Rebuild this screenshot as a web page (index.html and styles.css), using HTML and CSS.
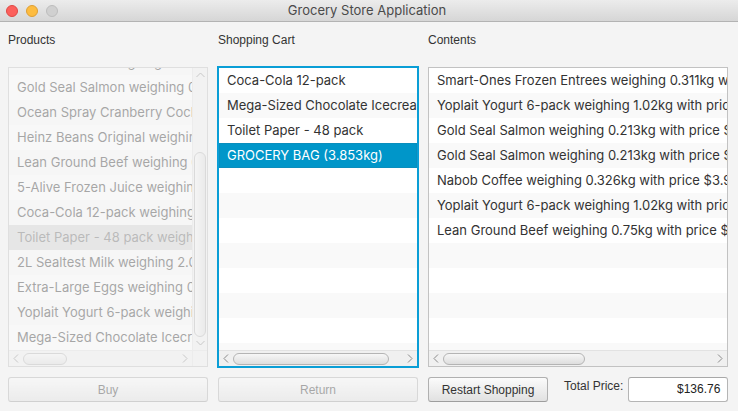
FILE: index.html
```html
<!DOCTYPE html>
<html>
<head>
<meta charset="utf-8">
<title>Grocery Store Application</title>
<link rel="stylesheet" href="styles.css">
</head>
<body>
<div class="window">
  <div class="titlebar">
    <div class="lights">
      <span class="light red"></span>
      <span class="light yellow"></span>
      <span class="light gray"></span>
    </div>
    <div class="title">Grocery Store Application</div>
  </div>
  <div class="content">
    <div class="col col-products">
      <div class="label">Products</div>
      <div class="list disabled has-vscroll">
        <div class="viewport">
          <div class="rows scrolled">
            <div class="row alt">Nabob Coffee weighing 0.326kg with price $3.99</div>
            <div class="row">Gold Seal Salmon weighing 0.213kg with price $5.49</div>
            <div class="row alt">Ocean Spray Cranberry Cocktail weighing 1.89kg with price $3.29</div>
            <div class="row">Heinz Beans Original weighing 0.398kg with price $1.79</div>
            <div class="row alt">Lean Ground Beef weighing 0.75kg with price $6.99</div>
            <div class="row">5-Alive Frozen Juice weighing 0.355kg with price $1.99</div>
            <div class="row alt">Coca-Cola 12-pack weighing 4.26kg with price $5.99</div>
            <div class="row selected-unfocused">Toilet Paper - 48 pack weighing 2.0kg with price $24.99</div>
            <div class="row alt">2L Sealtest Milk weighing 2.06kg with price $3.49</div>
            <div class="row">Extra-Large Eggs weighing 0.75kg with price $3.79</div>
            <div class="row alt">Yoplait Yogurt 6-pack weighing 1.02kg with price $4.29</div>
            <div class="row">Mega-Sized Chocolate Icecream weighing 2.5kg with price $7.99</div>
          </div>
        </div>
        <div class="vscroll">
          <svg class="arrow" width="9" height="6" viewBox="0 0 9 6"><path d="M0.5 5 L4.5 1 L8.5 5" fill="none" stroke="#8a8a8a" stroke-width="1"/></svg>
          <div class="vtrack"><div class="vthumb"></div></div>
          <svg class="arrow" width="9" height="6" viewBox="0 0 9 6"><path d="M0.5 1 L4.5 5 L8.5 1" fill="none" stroke="#8a8a8a" stroke-width="1"/></svg>
        </div>
        <div class="hscroll">
          <svg class="arrow" width="6" height="9" viewBox="0 0 6 9"><path d="M5 0.5 L1 4.5 L5 8.5" fill="none" stroke="#8a8a8a" stroke-width="1"/></svg>
          <div class="htrack"><div class="hthumb thumb-products"></div></div>
          <svg class="arrow" width="6" height="9" viewBox="0 0 6 9"><path d="M1 0.5 L5 4.5 L1 8.5" fill="none" stroke="#8a8a8a" stroke-width="1"/></svg>
        </div>
        <div class="corner"></div>
      </div>
      <button class="btn wide" disabled>Buy</button>
    </div>

    <div class="col col-cart">
      <div class="label">Shopping Cart</div>
      <div class="list focused">
        <div class="viewport">
          <div class="rows">
            <div class="row">Coca-Cola 12-pack</div>
            <div class="row alt">Mega-Sized Chocolate Icecream</div>
            <div class="row">Toilet Paper - 48 pack</div>
            <div class="row selected">GROCERY BAG (3.853kg)</div>
            <div class="row"></div>
            <div class="row alt"></div>
            <div class="row"></div>
            <div class="row alt"></div>
            <div class="row"></div>
            <div class="row alt"></div>
            <div class="row"></div>
            <div class="row alt"></div>
          </div>
        </div>
        <div class="hscroll">
          <svg class="arrow" width="6" height="9" viewBox="0 0 6 9"><path d="M5 0.5 L1 4.5 L5 8.5" fill="none" stroke="#8a8a8a" stroke-width="1"/></svg>
          <div class="htrack"><div class="hthumb thumb-cart"></div></div>
          <svg class="arrow" width="6" height="9" viewBox="0 0 6 9"><path d="M1 0.5 L5 4.5 L1 8.5" fill="none" stroke="#8a8a8a" stroke-width="1"/></svg>
        </div>
      </div>
      <button class="btn wide" disabled>Return</button>
    </div>

    <div class="col col-contents">
      <div class="label">Contents</div>
      <div class="list">
        <div class="viewport">
          <div class="rows">
            <div class="row">Smart-Ones Frozen Entrees weighing 0.311kg with price $4.49</div>
            <div class="row alt">Yoplait Yogurt 6-pack weighing 1.02kg with price $4.29</div>
            <div class="row">Gold Seal Salmon weighing 0.213kg with price $5.49</div>
            <div class="row alt">Gold Seal Salmon weighing 0.213kg with price $5.49</div>
            <div class="row">Nabob Coffee weighing 0.326kg with price $3.99</div>
            <div class="row alt">Yoplait Yogurt 6-pack weighing 1.02kg with price $4.29</div>
            <div class="row">Lean Ground Beef weighing 0.75kg with price $6.99</div>
            <div class="row alt"></div>
            <div class="row"></div>
            <div class="row alt"></div>
            <div class="row"></div>
            <div class="row alt"></div>
          </div>
        </div>
        <div class="hscroll">
          <svg class="arrow" width="6" height="9" viewBox="0 0 6 9"><path d="M5 0.5 L1 4.5 L5 8.5" fill="none" stroke="#8a8a8a" stroke-width="1"/></svg>
          <div class="htrack"><div class="hthumb thumb-contents"></div></div>
          <svg class="arrow" width="6" height="9" viewBox="0 0 6 9"><path d="M1 0.5 L5 4.5 L1 8.5" fill="none" stroke="#8a8a8a" stroke-width="1"/></svg>
        </div>
      </div>
      <div class="footer">
        <button class="btn restart">Restart Shopping</button>
        <span class="total-label">Total Price:</span>
        <div class="field">$136.76</div>
      </div>
    </div>
  </div>
</div>
</body>
</html>
```

FILE: styles.css
```css
* { box-sizing: border-box; }
html, body { margin: 0; padding: 0; }
body {
  width: 738px;
  height: 411px;
  overflow: hidden;
  background: #f4f4f4;
  font-family: "Liberation Sans", Arial, sans-serif;
  color: #333;
}
.window { width: 738px; height: 411px; display: flex; flex-direction: column; }

.titlebar {
  height: 22px;
  flex: none;
  position: relative;
  background: linear-gradient(#ececec, #d6d6d6);
  border-bottom: 1px solid #b3b3b3;
  display: flex;
  align-items: center;
  justify-content: center;
  padding-right: 4px;
}
.lights {
  position: absolute;
  left: 6px;
  top: 5px;
  display: flex;
  gap: 8px;
}
.light {
  width: 12px;
  height: 12px;
  border-radius: 50%;
  display: block;
}
.light.red { background: #fc605c; border: 1px solid #df4944; }
.light.yellow { background: #fdbc40; border: 1px solid #de9f34; }
.light.gray { background: #d0d0d0; border: 1px solid #bdbdbd; }
.title {
  font-family: Inter, "Liberation Sans", sans-serif;
  font-size: 13px;
  color: #4a4a4a;
  line-height: 21px;
}

.content {
  display: flex;
  gap: 10px;
  padding: 11px 10px 0 8px;
}
.col { display: flex; flex-direction: column; }
.col-products, .col-cart { width: 200px; }
.col-contents { width: 300px; }

.label {
  font-size: 12px;
  line-height: 14px;
  height: 14px;
  color: #333;
}

.list {
  margin-top: 20px;
  height: 300px;
  border: 1px solid #c2c2c2;
  background: #fff;
  display: grid;
  grid-template-columns: 1fr;
  grid-template-rows: 282px 16px;
  overflow: hidden;
}
.list.has-vscroll { grid-template-columns: 1fr 15px; }
.list.focused {
  border-color: #0a9ed6;
  box-shadow: 0 0 0 1px #0a9ed6;
  overflow: visible;
}
.list.disabled { opacity: 0.4; }

.viewport {
  overflow: hidden;
  background: #fff;
  min-width: 0;
}
.rows.scrolled { margin-top: -18px; }
.row {
  height: 25px;
  line-height: 25px;
  padding-left: 8px;
  white-space: nowrap;
  font-family: Inter, "Liberation Sans", sans-serif;
  font-size: 13px;
  color: #333;
  background: #fff;
}
.row.alt { background: #f9f9f9; }
.row.selected {
  background: #0096c9;
  color: #fff;
  box-shadow: inset 0 0 0 1px #0a8ebd;
}
.row.selected-unfocused { background: #d3d3d3; color: #666; }

.hscroll {
  display: flex;
  align-items: center;
  background: #f0f0f0;
  border-top: 1px solid #e2e2e2;
  padding: 0 4px;
  gap: 4px;
  min-width: 0;
}
.htrack { flex: 1; height: 12px; position: relative; }
.hthumb {
  position: absolute;
  top: 0;
  height: 12px;
  border: 1px solid #b4b4b4;
  border-radius: 6px;
  background: linear-gradient(#f7f7f7, #dedede);
}
.thumb-products { left: 0; width: 44px; }
.thumb-cart { left: 0; width: 156px; }
.thumb-contents { left: 0; width: 142px; }

.vscroll {
  grid-row: 1;
  grid-column: 2;
  background: #f0f0f0;
  border-left: 1px solid #e2e2e2;
  display: flex;
  flex-direction: column;
  align-items: center;
  padding: 4px 0;
  gap: 4px;
}
.vtrack { flex: 1; width: 12px; position: relative; }
.vthumb {
  position: absolute;
  left: 0;
  top: 70px;
  width: 12px;
  height: 185px;
  border: 1px solid #b4b4b4;
  border-radius: 6px;
  background: linear-gradient(90deg, #f7f7f7, #dedede);
}
.corner { background: #f0f0f0; border-top: 1px solid #e2e2e2; border-left: 1px solid #e2e2e2; }
.arrow { flex: none; display: block; }

.btn {
  margin-top: 10px;
  height: 25px;
  font-family: "Liberation Sans", Arial, sans-serif;
  font-size: 12px;
  color: #333;
  border: 1px solid #b0b0b0;
  border-bottom-color: #9d9d9d;
  border-radius: 3px;
  background: linear-gradient(#fbfbfb, #e1e1e1);
  padding: 0;
}
.btn.wide { width: 200px; }
.btn:disabled { opacity: 0.4; color: #333; }

.footer {
  margin-top: 10px;
  display: flex;
  align-items: flex-start;
  height: 25px;
}
.btn.restart { margin-top: 0; width: 120px; flex: none; }
.total-label {
  flex: none;
  white-space: nowrap;
  font-size: 12px;
  line-height: 14px;
  margin-left: 16px;
  margin-top: 2px;
  color: #333;
}
.field {
  flex: none;
  margin-left: 5px;
  width: 100px;
  height: 25px;
  background: #fff;
  border: 1px solid #b5b5b5;
  border-top-color: #a8a8a8;
  border-radius: 3px;
  font-size: 12px;
  line-height: 23px;
  text-align: right;
  padding-right: 7px;
  color: #222;
}
```
